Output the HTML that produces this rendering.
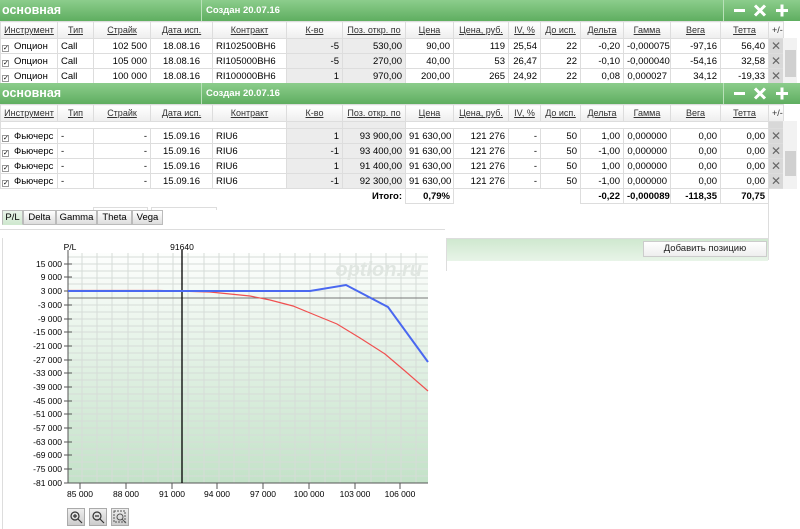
<!DOCTYPE html>
<html><head><meta charset="utf-8"><style>
*{margin:0;padding:0;box-sizing:border-box}
body{width:800px;height:529px;overflow:hidden;background:#fff;font-family:"Liberation Sans",Arial,sans-serif;font-size:9.5px;color:#000;position:relative}
.bar{position:absolute;left:0;width:800px;height:21px;background:linear-gradient(#8ccd8c,#5fae60);color:#fff}
.bar .t{position:absolute;left:2px;top:3px;font-size:12.5px;font-weight:bold}
.bar .c{position:absolute;left:206px;top:5px;font-size:9.5px;font-weight:bold}
.bar .d1{position:absolute;left:201px;top:0;width:1px;height:21px;background:#b9e1b9}
.bar .d2{position:absolute;left:723px;top:0;width:1px;height:21px;background:#b9e1b9}
.bar svg{position:absolute;left:730px;top:3px}
table{position:absolute;left:0;border-collapse:collapse;table-layout:fixed;width:783px}
td{height:15px;border:1px solid #ddd;padding:0 3px;white-space:nowrap;overflow:hidden;text-align:right;font-size:9.5px}
tr.h td{height:17px;text-align:center;text-decoration:underline;color:#333;background:linear-gradient(#fff,#eee);font-size:9px}
td.l{text-align:left}
td.g{background:#ececec}
td.x{background:#d8d8d8;text-align:center;color:#666;font-size:12px;padding:0}
.cb{display:inline-block;width:7px;height:7px;border:1px solid #999;margin-right:5px;margin-left:-2px;font-size:7px;line-height:6px;vertical-align:-1px}
.sb{position:absolute;left:783px;width:14px;background:#f2f2f2}
.thumb{position:absolute;left:785px;width:11px;background:#d0d0d0}
.tab{position:absolute;top:210px;height:15px;border:1px solid #bbb;background:linear-gradient(#fff,#ddd);font-size:9.5px;text-align:center;line-height:13px}
.zb{position:absolute;top:508px;width:18px;height:18px;border:1px solid #aaa;background:linear-gradient(#eee,#ccc)}
</style></head><body>

<div class="bar" style="top:0"><span class="t">основная</span><div class="d1"></div><span class="c">Создан 20.07.16</span><div class="d2"></div>
<svg width="66" height="15" stroke="#fff" stroke-width="3"><path d="M4 7.5H15"/><path d="M25 2.5L35 12.5M35 2.5L25 12.5"/><path d="M46 7.5H58M52 1.5V13.5"/></svg></div>

<table style="top:21px">
<colgroup><col style="width:57px"><col style="width:36px"><col style="width:57px"><col style="width:62px"><col style="width:74px"><col style="width:56px"><col style="width:63px"><col style="width:48px"><col style="width:55px"><col style="width:32px"><col style="width:40px"><col style="width:43px"><col style="width:47px"><col style="width:50px"><col style="width:48px"><col style="width:15px"></colgroup>
<tr class="h"><td>Инструмент</td><td>Тип</td><td>Страйк</td><td>Дата исп.</td><td>Контракт</td><td>К-во</td><td>Поз. откр. по</td><td>Цена</td><td>Цена, руб.</td><td>IV, %</td><td>До исп.</td><td>Дельта</td><td>Гамма</td><td>Вега</td><td>Тетта</td><td style="text-decoration:none">+/-</td></tr>
<tr><td class="l"><span class="cb">✓</span>Опцион</td><td class="l">Call</td><td>102 500</td><td style="text-align:center">18.08.16</td><td class="l">RI102500BH6</td><td class="g">-5</td><td class="g">530,00</td><td>90,00</td><td>119</td><td>25,54</td><td>22</td><td>-0,20</td><td>-0,000075</td><td>-97,16</td><td>56,40</td><td class="x">✕</td></tr>
<tr><td class="l"><span class="cb">✓</span>Опцион</td><td class="l">Call</td><td>105 000</td><td style="text-align:center">18.08.16</td><td class="l">RI105000BH6</td><td class="g">-5</td><td class="g">270,00</td><td>40,00</td><td>53</td><td>26,47</td><td>22</td><td>-0,10</td><td>-0,000040</td><td>-54,16</td><td>32,58</td><td class="x">✕</td></tr>
<tr><td class="l"><span class="cb">✓</span>Опцион</td><td class="l">Call</td><td>100 000</td><td style="text-align:center">18.08.16</td><td class="l">RI100000BH6</td><td class="g">1</td><td class="g">970,00</td><td>200,00</td><td>265</td><td>24,92</td><td>22</td><td>0,08</td><td>0,000027</td><td>34,12</td><td>-19,33</td><td class="x">✕</td></tr>
</table>
<div class="sb" style="top:38px;height:45px"></div><div class="thumb" style="top:50px;height:27px"></div>

<div class="bar" style="top:83px"><span class="t">основная</span><div class="d1"></div><span class="c">Создан 20.07.16</span><div class="d2"></div>
<svg width="66" height="15" stroke="#fff" stroke-width="3"><path d="M4 7.5H15"/><path d="M25 2.5L35 12.5M35 2.5L25 12.5"/><path d="M46 7.5H58M52 1.5V13.5"/></svg></div>

<table style="top:104px">
<colgroup><col style="width:57px"><col style="width:36px"><col style="width:57px"><col style="width:62px"><col style="width:74px"><col style="width:56px"><col style="width:63px"><col style="width:48px"><col style="width:55px"><col style="width:32px"><col style="width:40px"><col style="width:43px"><col style="width:47px"><col style="width:50px"><col style="width:48px"><col style="width:15px"></colgroup>
<tr class="h"><td>Инструмент</td><td>Тип</td><td>Страйк</td><td>Дата исп.</td><td>Контракт</td><td>К-во</td><td>Поз. откр. по</td><td>Цена</td><td>Цена, руб.</td><td>IV, %</td><td>До исп.</td><td>Дельта</td><td>Гамма</td><td>Вега</td><td>Тетта</td><td style="text-decoration:none">+/-</td></tr>
<tr><td style="height:7px" colspan="5"></td><td class="g" style="height:7px"></td><td class="g" style="height:7px"></td><td colspan="8" style="height:7px"></td><td class="x" style="height:7px"></td></tr>
<tr><td class="l"><span class="cb">✓</span>Фьючерс</td><td class="l">-</td><td>-</td><td style="text-align:center">15.09.16</td><td class="l">RIU6</td><td class="g">1</td><td class="g">93 900,00</td><td>91 630,00</td><td>121 276</td><td>-</td><td>50</td><td>1,00</td><td>0,000000</td><td>0,00</td><td>0,00</td><td class="x">✕</td></tr>
<tr><td class="l"><span class="cb">✓</span>Фьючерс</td><td class="l">-</td><td>-</td><td style="text-align:center">15.09.16</td><td class="l">RIU6</td><td class="g">-1</td><td class="g">93 400,00</td><td>91 630,00</td><td>121 276</td><td>-</td><td>50</td><td>-1,00</td><td>0,000000</td><td>0,00</td><td>0,00</td><td class="x">✕</td></tr>
<tr><td class="l"><span class="cb">✓</span>Фьючерс</td><td class="l">-</td><td>-</td><td style="text-align:center">15.09.16</td><td class="l">RIU6</td><td class="g">1</td><td class="g">91 400,00</td><td>91 630,00</td><td>121 276</td><td>-</td><td>50</td><td>1,00</td><td>0,000000</td><td>0,00</td><td>0,00</td><td class="x">✕</td></tr>
<tr><td class="l"><span class="cb">✓</span>Фьючерс</td><td class="l">-</td><td>-</td><td style="text-align:center">15.09.16</td><td class="l">RIU6</td><td class="g">-1</td><td class="g">92 300,00</td><td>91 630,00</td><td>121 276</td><td>-</td><td>50</td><td>-1,00</td><td>0,000000</td><td>0,00</td><td>0,00</td><td class="x">✕</td></tr>
<tr><td colspan="7" style="border:none;font-weight:bold">Итого:</td><td style="font-weight:bold">0,79%</td><td colspan="3" style="border:none"></td><td style="font-weight:bold">-0,22</td><td style="font-weight:bold">-0,000089</td><td style="font-weight:bold">-118,35</td><td style="font-weight:bold">70,75</td><td style="border:none"></td></tr>
</table>
<div class="sb" style="top:121px;height:68px"></div><div class="thumb" style="top:151px;height:25px"></div>
<div style="position:absolute;left:768px;top:190px;width:1px;height:70px;background:#ddd"></div>

<div style="position:absolute;left:93px;top:207px;width:55px;height:3px;border:1px solid #ddd;border-bottom:none"></div>
<div style="position:absolute;left:151px;top:207px;width:66px;height:3px;border:1px solid #ddd;border-bottom:none"></div>
<div class="tab" style="left:2px;width:21px;background:linear-gradient(#eaf5ea,#cfe8cf);border-bottom-color:#cfe8cf">P/L</div>
<div class="tab" style="left:23px;width:33px">Delta</div>
<div class="tab" style="left:56px;width:41px">Gamma</div>
<div class="tab" style="left:97px;width:35px">Theta</div>
<div class="tab" style="left:132px;width:31px">Vega</div>
<div style="position:absolute;left:0;top:229px;width:445px;height:1px;background:#ddd"></div>
<div style="position:absolute;left:2px;top:238px;width:1px;height:291px;background:#ddd"></div>

<div style="position:absolute;left:446px;top:238px;width:322px;height:23px;border-left:1px solid #ddd;border-top:1px solid #ddd;background:linear-gradient(#cfe8cf,#e8f4e8)"></div>
<div style="position:absolute;left:446px;top:261px;width:1px;height:10px;background:#ddd"></div>
<div style="position:absolute;left:643px;top:241px;width:124px;height:16px;border:1px solid #ccc;background:linear-gradient(#fff,#eee);font-size:9.5px;text-align:center;line-height:14px;color:#222">Добавить позицию</div>

<svg style="position:absolute;left:0;top:230px" width="440" height="280" font-family="Liberation Sans, sans-serif" font-size="8.5">
<defs><linearGradient id="gg" x1="0" y1="0" x2="0" y2="1"><stop offset="0" stop-color="#fdfefd"/><stop offset="1" stop-color="#c3e2c8"/></linearGradient></defs>
<rect x="68" y="23" width="360" height="230" fill="url(#gg)"/>
<g stroke="#d6dcd8" stroke-width="1">
<path d="M82 23V253M97 23V253M112 23V253M128 23V253M143 23V253M158 23V253M173 23V253M188 23V253M204 23V253M219 23V253M234 23V253M249 23V253M264 23V253M280 23V253M295 23V253M310 23V253M325 23V253M340 23V253M356 23V253M371 23V253M386 23V253M401 23V253M416 23V253"/>
<path d="M68 27H428M68 34H428M68 41H428M68 48H428M68 54H428M68 61H428M68 75H428M68 82H428M68 89H428M68 96H428M68 102H428M68 109H428M68 116H428M68 123H428M68 130H428M68 137H428M68 143H428M68 150H428M68 157H428M68 164H428M68 171H428M68 178H428M68 184H428M68 191H428M68 198H428M68 205H428M68 212H428M68 219H428M68 225H428M68 232H428M68 239H428M68 246H428"/>
</g>
<text x="422" y="46" text-anchor="end" font-size="20" font-style="italic" font-weight="bold" fill="#e0e6e1">option.ru</text>
<path d="M68 68H428" stroke="#777" stroke-width="1"/>
<path d="M68 20V253H428" stroke="#555" fill="none"/>
<path d="M182 20V253" stroke="#000" stroke-width="1.3"/>
<text x="70" y="20" text-anchor="middle">P/L</text>
<text x="182" y="20" text-anchor="middle">91640</text>
<g stroke="#555">
<path d="M64 34H72M64 47H72M64 61H72M64 75H72M64 89H72M64 102H72M64 116H72M64 130H72M64 143H72M64 157H72M64 171H72M64 184H72M64 198H72M64 212H72M64 225H72M64 239H72M64 253H72"/>
<path d="M80 253V259M126 253V259M172 253V259M217 253V259M263 253V259M309 253V259M355 253V259M400 253V259"/>
</g>
<g text-anchor="end">
<text x="62" y="37">15 000</text><text x="62" y="50">9 000</text><text x="62" y="64">3 000</text><text x="62" y="78">-3 000</text><text x="62" y="92">-9 000</text><text x="62" y="105">-15 000</text><text x="62" y="119">-21 000</text><text x="62" y="133">-27 000</text><text x="62" y="146">-33 000</text><text x="62" y="160">-39 000</text><text x="62" y="174">-45 000</text><text x="62" y="187">-51 000</text><text x="62" y="201">-57 000</text><text x="62" y="215">-63 000</text><text x="62" y="228">-69 000</text><text x="62" y="242">-75 000</text><text x="62" y="256">-81 000</text>
</g>
<g text-anchor="middle">
<text x="80" y="267">85 000</text><text x="126" y="267">88 000</text><text x="172" y="267">91 000</text><text x="217" y="267">94 000</text><text x="263" y="267">97 000</text><text x="309" y="267">100 000</text><text x="355" y="267">103 000</text><text x="400" y="267">106 000</text>
</g>
<path d="M68 60.5L160 60.5L210 62L250 66L270 70L293 76L315 85L337 94L360 108L385 124L405 141L428 161" stroke="#f05050" stroke-width="1.2" fill="none"/>
<path d="M68 61L310 61L346 55L388 77L428 132" stroke="#4a68f0" stroke-width="2" fill="none"/>
</svg>

<div class="zb" style="left:67px"><svg width="16" height="16" stroke="#333" fill="none" stroke-width="1.2"><circle cx="7" cy="7" r="4"/><path d="M5 7H9M7 5V9M10 10L14 14"/></svg></div>
<div class="zb" style="left:89px"><svg width="16" height="16" stroke="#333" fill="none" stroke-width="1.2"><circle cx="7" cy="7" r="4"/><path d="M5 7H9M10 10L14 14"/></svg></div>
<div class="zb" style="left:111px"><svg width="16" height="16" stroke="#555" fill="none" stroke-width="1"><rect x="2" y="2" width="11" height="11" stroke-dasharray="2 1"/><circle cx="8" cy="8" r="3"/><path d="M10 10L14 14"/></svg></div>
</body></html>
